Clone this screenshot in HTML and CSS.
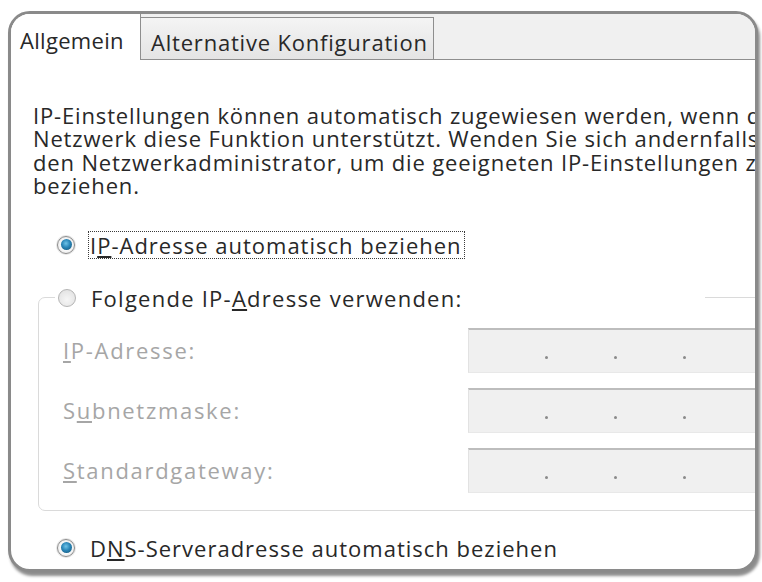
FILE: index.html
```html
<!DOCTYPE html>
<html lang="de">
<head>
<meta charset="utf-8">
<title>Eigenschaften von Internetprotokoll Version 4</title>
<link rel="stylesheet" href="styles.css">
</head>
<body>
<div class="frame">
  <div class="tabs">
    <div class="tab tab-active">Allgemein</div>
    <div class="tab tab-inactive">Alternative Konfiguration</div>
    <div class="tab-fill"></div>
  </div>
  <div class="panel">
    <p class="intro">IP-Einstellungen können automatisch zugewiesen werden, wenn das<br>Netzwerk diese Funktion unterstützt. Wenden Sie sich andernfalls an<br>den Netzwerkadministrator, um die geeigneten IP-Einstellungen zu<br>beziehen.</p>

    <div class="radio-row first-radio">
      <span class="radio radio-on"><span class="dot"></span></span>
      <span class="label focus">I<u>P</u>-Adresse automatisch beziehen</span>
    </div>

    <fieldset class="group">
      <legend class="group-legend">
        <span class="radio radio-off"></span>
        <span class="label legend-label">Folgende IP-<u>A</u>dresse verwenden:</span>
      </legend>
      <div class="field-row">
        <span class="field-label"><u>I</u>P-Adresse:</span>
        <span class="ip-box"><i></i><i></i><i></i></span>
      </div>
      <div class="field-row">
        <span class="field-label">S<u>u</u>bnetzmaske:</span>
        <span class="ip-box"><i></i><i></i><i></i></span>
      </div>
      <div class="field-row">
        <span class="field-label"><u>S</u>tandardgateway:</span>
        <span class="ip-box"><i></i><i></i><i></i></span>
      </div>
    </fieldset>

    <div class="radio-row last-radio">
      <span class="radio radio-on"><span class="dot"></span></span>
      <span class="label">D<u>N</u>S-Serveradresse automatisch beziehen</span>
    </div>
  </div>
</div>
</body>
</html>
```
FILE: styles.css
```css
html, body {
  margin: 0;
  padding: 0;
  background: #ffffff;
}

body {
  font-family: "Open Sans", "Noto Sans", "DejaVu Sans", sans-serif;
  font-size: 22px;
  letter-spacing: 1px;
  color: #282828;
  width: 762px;
  height: 582px;
  overflow: hidden;
}

.frame {
  margin: 11px 0 0 8px;
  width: 750px;
  height: 561px;
  box-sizing: border-box;
  border: 3px solid #8a8a8a;
  border-radius: 22px;
  box-shadow: 2px 4px 3px rgba(0, 0, 0, 0.45);
  background: #ffffff;
  overflow: hidden;
}

.tabs {
  display: flex;
  align-items: flex-end;
  height: 46px;
  background: #f0f0f0;
}

.tab {
  box-sizing: border-box;
  white-space: nowrap;
  display: flex;
  align-items: center;
}

.tab-active {
  width: 130px;
  height: 46px;
  background: #ffffff;
  border-right: 1px solid #8e8e8e;
  padding: 5px 0 0 9px;
  letter-spacing: 0.3px;
}

.tab-inactive {
  width: 293px;
  height: 43px;
  padding: 6px 0 0 10px;
  letter-spacing: 0.8px;
  background: linear-gradient(#f4f4f4, #e4e4e4);
  border-top: 1px solid #8e8e8e;
  border-right: 1px solid #8e8e8e;
  border-bottom: 1px solid #8e8e8e;
}

.tab-fill {
  flex: 1;
  align-self: stretch;
  border-bottom: 1px solid #8e8e8e;
}

.panel {
  padding-left: 22px;
}

.intro {
  margin: 44px 0 0 0;
  line-height: 23.4px;
  letter-spacing: 0.85px;
  white-space: nowrap;
}

.radio-row {
  display: flex;
  align-items: center;
  height: 28px;
  margin-left: 24px;
  white-space: nowrap;
}

.first-radio {
  margin-top: 33px;
}

.last-radio {
  margin-top: 23px;
}

.radio {
  box-sizing: border-box;
  width: 18px;
  height: 18px;
  border-radius: 50%;
  flex: none;
  display: flex;
  align-items: center;
  justify-content: center;
  margin-right: 15px;
}

.radio-on {
  border: 1px solid #8d8d8d;
  background: radial-gradient(circle, #ffffff 40%, #dcdcdc 100%);
  box-shadow: 0 0 0 1px #e6e6e6;
}

.radio-on .dot {
  width: 11px;
  height: 11px;
  border-radius: 50%;
  background: radial-gradient(circle at 45% 40%, #6fc3e8 0%, #2a86b8 45%, #16506f 100%);
}

.radio-off {
  border: 1px solid #b4b4b4;
  background: radial-gradient(circle at 50% 60%, #f6f6f6 0%, #dedede 100%);
}

.label {
  line-height: 26px;
}

.legend-label {
  letter-spacing: 1.25px;
}

.focus {
  border: 1px dotted #3a3a3a;
  padding: 0 2px 0 1px;
  margin-left: -2px;
}

.group {
  margin: 25px 0 0 5px;
  padding: 0 0 17px 0;
  width: 900px;
  border: 1px solid #dadada;
  border-radius: 7px;
}

.group-legend {
  display: flex;
  align-items: center;
  box-sizing: border-box;
  width: 650px;
  height: 28px;
  margin-left: 16px;
  padding: 0 0 0 3px;
  background: #ffffff;
  white-space: nowrap;
}

.field-row {
  display: flex;
  align-items: center;
  height: 45px;
  margin-top: 15px;
}

.field-row:first-of-type {
  margin-top: 16px;
}

.field-label {
  box-sizing: border-box;
  width: 429px;
  flex: none;
  padding-left: 24px;
  color: #a6a6a6;
  letter-spacing: 1.7px;
  white-space: nowrap;
}

.ip-box {
  box-sizing: border-box;
  width: 320px;
  height: 45px;
  flex: none;
  background: #f0f0f0;
  border-top: 2px solid #bdbdbd;
  border-left: 1px solid #e2e2e2;
  border-bottom: 1px solid #e8e8e8;
  display: flex;
  align-items: flex-end;
  gap: 66px;
  padding: 0 0 13px 76px;
}

.ip-box i {
  display: block;
  width: 3px;
  height: 3px;
  border-radius: 50%;
  background: #8a8a8a;
}
```
